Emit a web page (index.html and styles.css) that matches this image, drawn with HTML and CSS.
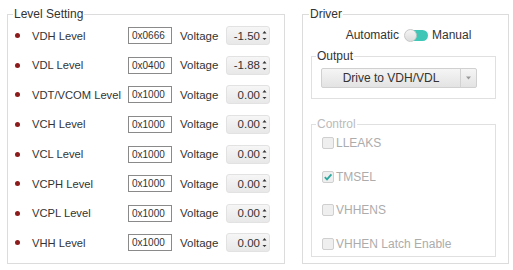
FILE: index.html
```html
<!DOCTYPE html>
<html>
<head>
<meta charset="utf-8">
<link rel="stylesheet" href="styles.css">
</head>
<body>
<div class="page">
  <fieldset class="group levels">
    <legend>Level Setting</legend>
    <div class="row"><span class="dot"></span><span class="name">VDH Level</span><span class="hex">0x0666</span><span class="vlabel">Voltage</span><span class="spin"><span class="val">-1.50</span><span class="arrows"><svg width="5" height="13" viewBox="0 0 5 13"><path d="M2.5 2 L4.5 4.5 L0.5 4.5 Z"/><path d="M0.5 9 L4.5 9 L2.5 11 Z"/></svg></span></span></div>
    <div class="row"><span class="dot"></span><span class="name">VDL Level</span><span class="hex">0x0400</span><span class="vlabel">Voltage</span><span class="spin"><span class="val">-1.88</span><span class="arrows"><svg width="5" height="13" viewBox="0 0 5 13"><path d="M2.5 2 L4.5 4.5 L0.5 4.5 Z"/><path d="M0.5 9 L4.5 9 L2.5 11 Z"/></svg></span></span></div>
    <div class="row"><span class="dot"></span><span class="name">VDT/VCOM Level</span><span class="hex">0x1000</span><span class="vlabel">Voltage</span><span class="spin"><span class="val">0.00</span><span class="arrows"><svg width="5" height="13" viewBox="0 0 5 13"><path d="M2.5 2 L4.5 4.5 L0.5 4.5 Z"/><path d="M0.5 9 L4.5 9 L2.5 11 Z"/></svg></span></span></div>
    <div class="row"><span class="dot"></span><span class="name">VCH Level</span><span class="hex">0x1000</span><span class="vlabel">Voltage</span><span class="spin"><span class="val">0.00</span><span class="arrows"><svg width="5" height="13" viewBox="0 0 5 13"><path d="M2.5 2 L4.5 4.5 L0.5 4.5 Z"/><path d="M0.5 9 L4.5 9 L2.5 11 Z"/></svg></span></span></div>
    <div class="row"><span class="dot"></span><span class="name">VCL Level</span><span class="hex">0x1000</span><span class="vlabel">Voltage</span><span class="spin"><span class="val">0.00</span><span class="arrows"><svg width="5" height="13" viewBox="0 0 5 13"><path d="M2.5 2 L4.5 4.5 L0.5 4.5 Z"/><path d="M0.5 9 L4.5 9 L2.5 11 Z"/></svg></span></span></div>
    <div class="row"><span class="dot"></span><span class="name">VCPH Level</span><span class="hex">0x1000</span><span class="vlabel">Voltage</span><span class="spin"><span class="val">0.00</span><span class="arrows"><svg width="5" height="13" viewBox="0 0 5 13"><path d="M2.5 2 L4.5 4.5 L0.5 4.5 Z"/><path d="M0.5 9 L4.5 9 L2.5 11 Z"/></svg></span></span></div>
    <div class="row"><span class="dot"></span><span class="name">VCPL Level</span><span class="hex">0x1000</span><span class="vlabel">Voltage</span><span class="spin"><span class="val">0.00</span><span class="arrows"><svg width="5" height="13" viewBox="0 0 5 13"><path d="M2.5 2 L4.5 4.5 L0.5 4.5 Z"/><path d="M0.5 9 L4.5 9 L2.5 11 Z"/></svg></span></span></div>
    <div class="row"><span class="dot"></span><span class="name">VHH Level</span><span class="hex">0x1000</span><span class="vlabel">Voltage</span><span class="spin"><span class="val">0.00</span><span class="arrows"><svg width="5" height="13" viewBox="0 0 5 13"><path d="M2.5 2 L4.5 4.5 L0.5 4.5 Z"/><path d="M0.5 9 L4.5 9 L2.5 11 Z"/></svg></span></span></div>
  </fieldset>

  <fieldset class="group driver">
    <legend>Driver</legend>
    <div class="mode">
      <span>Automatic</span>
      <span class="toggle"><span class="knob"></span></span>
      <span>Manual</span>
    </div>
    <fieldset class="sub output">
      <legend>Output</legend>
      <div class="select">
        <span class="sel-text">Drive to VDH/VDL</span>
        <span class="sel-btn"><svg width="5" height="4" viewBox="0 0 5 4"><path d="M0 0.5 L5 0.5 L2.5 3.5 Z"/></svg></span>
      </div>
    </fieldset>
    <fieldset class="sub control">
      <legend>Control</legend>
      <div class="check"><span class="box"></span><span>LLEAKS</span></div>
      <div class="check"><span class="box"><svg width="10" height="10" viewBox="0 0 10 10"><path d="M1.8 5.2 L4 7.4 L8.4 2.4" fill="none" stroke="#2aa9a0" stroke-width="1.8"/></svg></span><span>TMSEL</span></div>
      <div class="check"><span class="box"></span><span>VHHENS</span></div>
      <div class="check"><span class="box"></span><span>VHHEN Latch Enable</span></div>
    </fieldset>
  </fieldset>
</div>
</body>
</html>
```

FILE: styles.css
```css
* { box-sizing: border-box; }
html, body { margin: 0; padding: 0; background: #fff; }
body {
  font-family: "Liberation Sans", Arial, sans-serif;
  font-size: 11.5px;
  color: #333;
}
.page {
  display: flex;
  align-items: flex-start;
  padding: 7px 0 0 7px;
}
.group {
  margin: 0;
  border: 1px solid #dcdcdc;
  height: 257px;
}
.group > legend {
  font-size: 12px;
  line-height: 14px;
  padding: 0 1px;
  margin-left: -2px;
  color: #333;
}
.levels {
  width: 278px;
  padding: 0 0 0 7px;
}
.row {
  display: flex;
  align-items: center;
  height: 29.57px;
}
.dot {
  width: 5px;
  height: 5px;
  border-radius: 50%;
  background: #8e1b1b;
  margin-right: 12px;
}
.name {
  width: 96px;
  white-space: nowrap;
  font-size: 11.2px;
  color: #333;
}
.hex {
  width: 44px;
  height: 17px;
  border: 1px solid #8a8a8a;
  font-size: 10px;
  line-height: 15px;
  padding-left: 3px;
  color: #333;
}
.vlabel {
  width: 54px;
  padding-left: 8px;
}
.spin {
  width: 44px;
  height: 19px;
  border-radius: 3px;
  background: linear-gradient(#f6f6f6, #e8e8e8);
  border: 1px solid #e2e2e2;
  display: flex;
  align-items: center;
  justify-content: flex-end;
}
.val {
  padding-right: 2px;
  color: #333;
}
.arrows {
  display: flex;
  width: 7px;
  height: 17px;
  align-items: center;
}
.arrows svg { fill: #333; }

.driver {
  margin-left: 17px;
  width: 207px;
  padding: 0 0 0 8px;
}
.mode {
  display: flex;
  align-items: center;
  justify-content: center;
  height: 28px;
  padding-right: 2px;
  font-size: 12px;
  color: #333;
}
.toggle {
  position: relative;
  width: 23px;
  height: 11px;
  border-radius: 6px;
  background: #3ec7b6;
  margin: 0 4px 0 6px;
}
.knob {
  position: absolute;
  left: -1px;
  top: -1px;
  width: 13px;
  height: 13px;
  border-radius: 50%;
  background: linear-gradient(#f4f4f4, #dcdcdc);
  border: 1px solid #c8c8c8;
}
.sub {
  margin: 0;
  width: 185px;
  border: 1px solid #e0e0e0;
}
.sub > legend {
  font-size: 12px;
  line-height: 14px;
  padding: 0 1px;
}
.output {
  height: 50px;
  padding: 5px 0 0 9px;
  margin-top: 0;
}
.output > legend { color: #333; margin-left: -5px; }
.select {
  display: flex;
  width: 156px;
  height: 20px;
  border: 1px solid #d0d0d0;
  border-radius: 2px;
  background: linear-gradient(#f5f5f5, #e3e3e3);
  font-size: 12px;
  color: #333;
}
.sel-text {
  flex: 1;
  text-align: center;
  line-height: 18px;
  border-right: 1px solid #d2d2d2;
}
.sel-btn {
  width: 15px;
  display: flex;
  align-items: center;
  justify-content: center;
}
.sel-btn svg { fill: #999; }
.control {
  margin-top: 18px;
  height: 140px;
  padding: 5px 0 0 10px;
  display: flex;
  flex-direction: column;
  gap: 19.5px;
}
.control > legend { color: #bbb; margin-left: -6px; }
.check {
  display: flex;
  align-items: center;
  height: 14px;
  font-size: 12px;
  color: #acacac;
}
.box {
  width: 12px;
  height: 12px;
  border: 1px solid #cfcfcf;
  border-radius: 2px;
  background: #efefef;
  margin-right: 2px;
  display: flex;
  align-items: center;
  justify-content: center;
}
```
